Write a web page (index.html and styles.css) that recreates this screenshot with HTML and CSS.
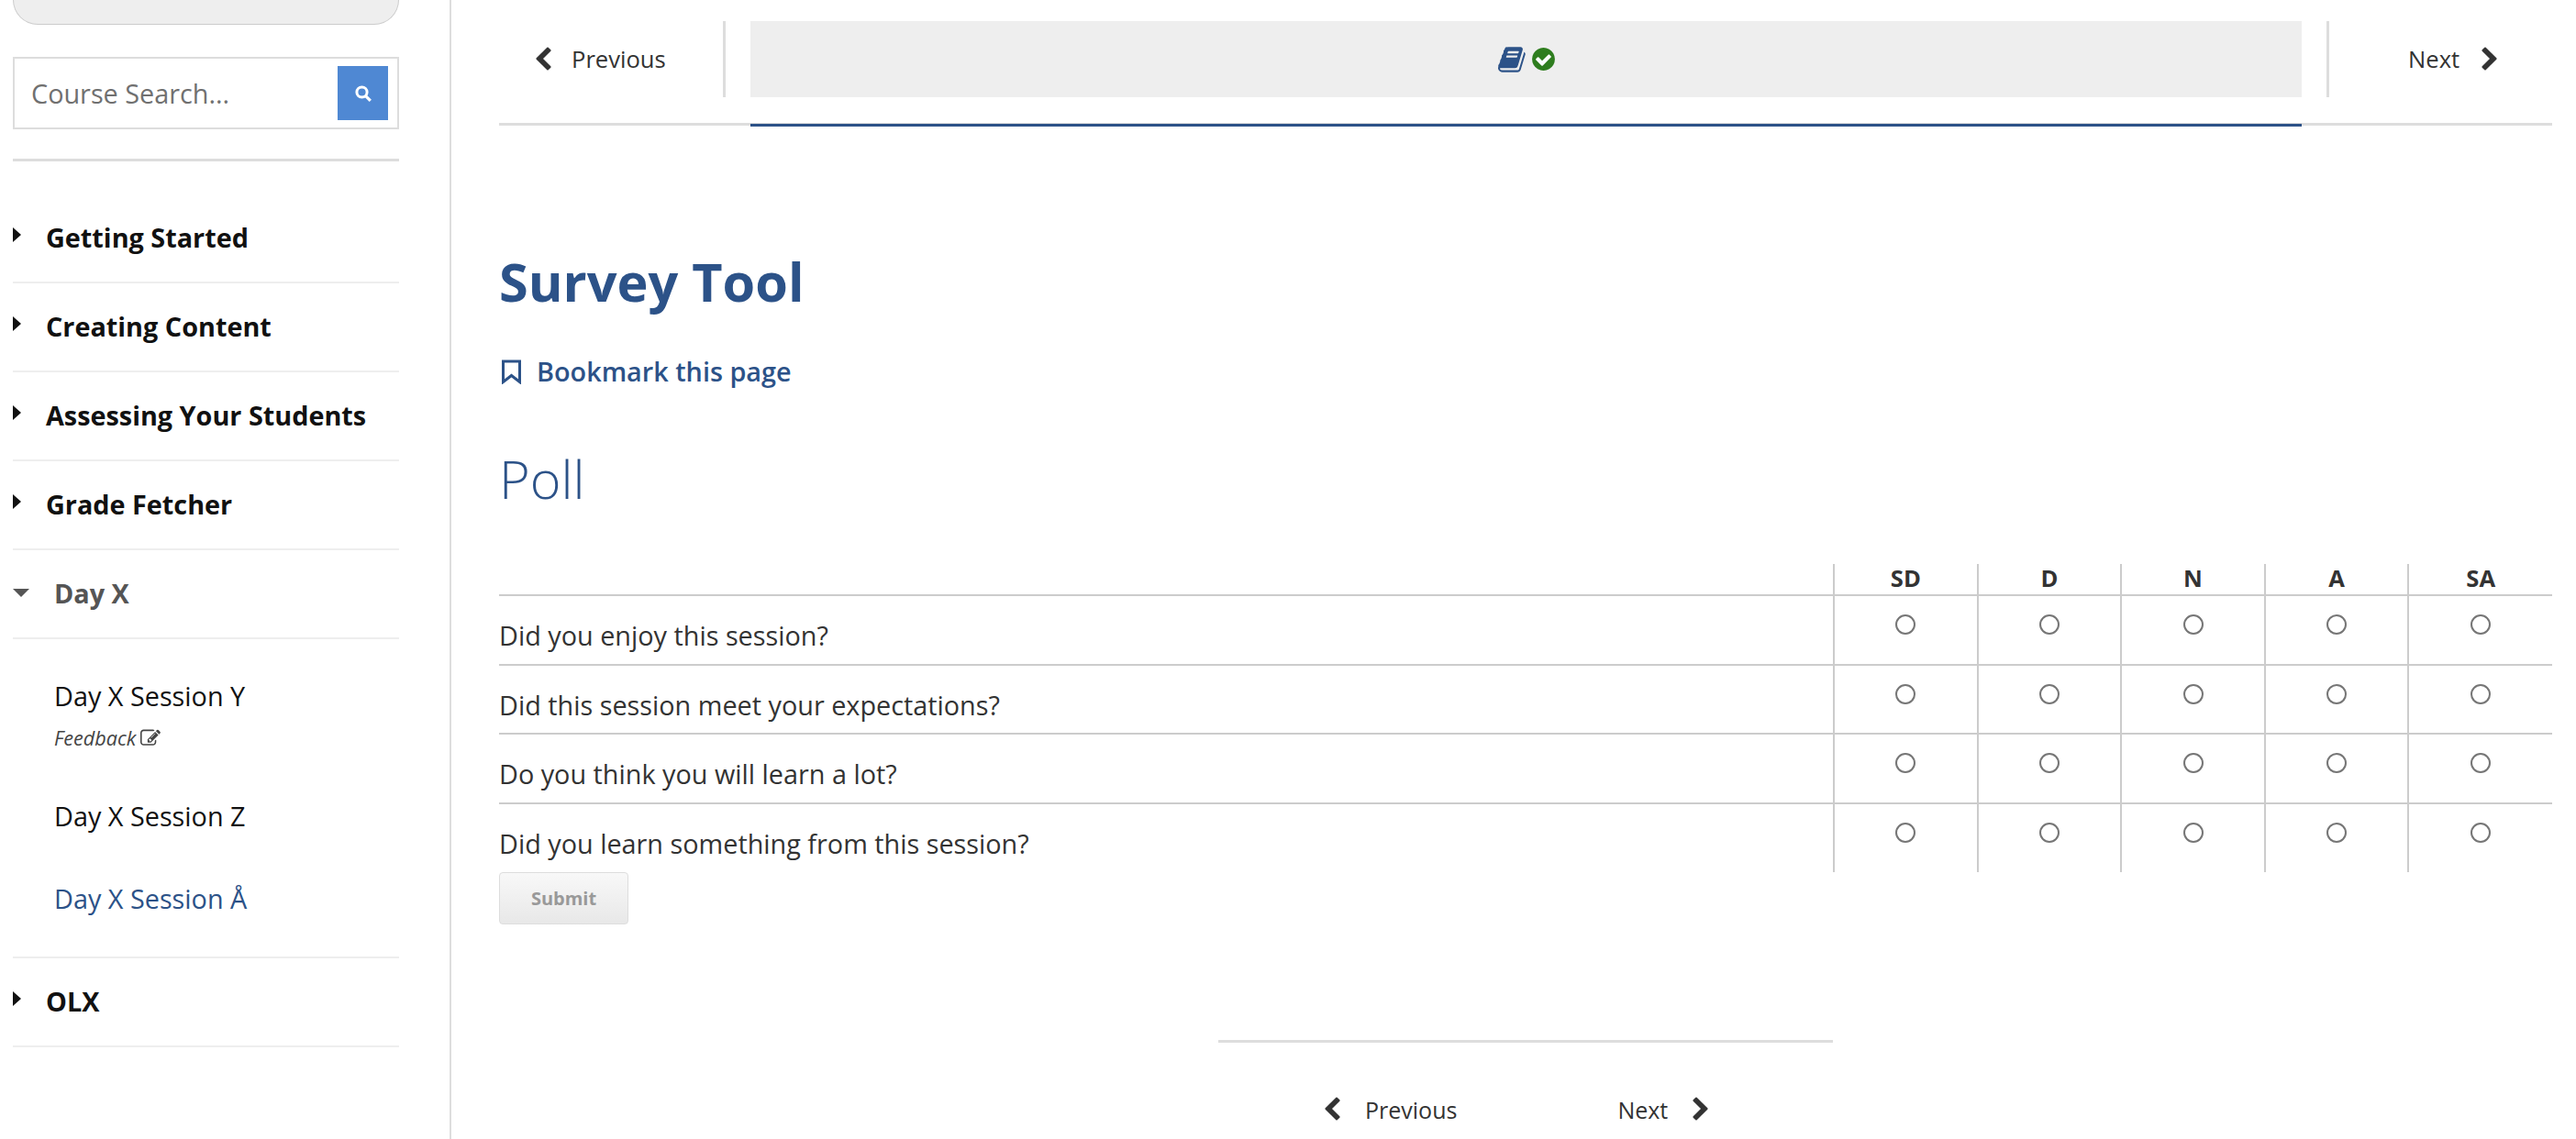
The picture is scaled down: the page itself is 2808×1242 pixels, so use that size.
FILE: index.html
```html
<!DOCTYPE html>
<html lang="en">

<head>
    <meta charset="UTF-8">
    <title>Survey Tool</title>
    <link rel="stylesheet" href="styles.css">
</head>

<body>

<div class="page">
    <aside class="sidebar">
        <div class="pill"></div>

        <div class="search">
            <span class="search-text">Course Search...</span>
            <button class="search-btn" type="button" aria-label="Search">
                <svg width="20" height="20" viewBox="0 0 20 20" fill="none" stroke="#fff">
                    <circle cx="8.5" cy="8.5" r="5.6" stroke-width="3"/>
                    <path d="M12.8 12.8l5 5" stroke-width="3.2"/>
                </svg>
            </button>
        </div>

        <ul class="menu">
            <li class="chapter"><span class="caret-right"></span>Getting Started</li>
            <li class="chapter"><span class="caret-right"></span>Creating Content</li>
            <li class="chapter"><span class="caret-right"></span>Assessing Your Students</li>
            <li class="chapter"><span class="caret-right"></span>Grade Fetcher</li>
            <li class="chapter open"><span class="caret-down"></span>Day X</li>
            <li class="sessions">
                <div class="session first">Day X Session Y</div>
                <div class="feedback">Feedback
                    <svg width="22" height="22" viewBox="0 0 1792 1792" fill="#444"><path d="M888 1184l116-116-152-152-116 116v56h96v96h56zm440-720q-16-16-33 1l-350 350q-17 17-1 33t33-1l350-350q17-17 1-33zm80 594v190q0 119-84.5 203.5t-203.5 84.5h-832q-119 0-203.5-84.5t-84.5-203.5v-832q0-119 84.5-203.5t203.5-84.5h832q63 0 117 25 15 7 18 23 3 17-9 29l-49 49q-14 14-32 8-23-6-45-6h-832q-66 0-113 47t-47 113v832q0 66 47 113t113 47h832q66 0 113-47t47-113v-126q0-13 9-22l64-64q15-15 35-7t20 29zm-96-738l288 288-672 672h-288v-288zm444 132l-92 92-288-288 92-92q28-28 68-28t68 28l152 152q28 28 28 68t-28 68z"/></svg>
                </div>
                <div class="session second">Day X Session Z</div>
                <div class="session third current">Day X Session Å</div>
            </li>
            <li class="chapter"><span class="caret-right"></span>OLX</li>
        </ul>
    </aside>

    <main class="content">
        <div class="topnav">
            <a class="nav-btn prev">
                <svg class="chev" viewBox="0 0 1792 1792"><path d="M1427 301l-531 531 531 531q19 19 19 45t-19 45l-166 166q-19 19-45 19t-45-19l-742-742q-19-19-19-45t19-45l742-742q19-19 45-19t45 19l166 166q19 19 19 45t-19 45z"/></svg>
                Previous
            </a>
            <div class="tab">
                <svg width="32" height="32" viewBox="0 0 1792 1792" fill="#2c5288"><path d="M1639 478q40 57 18 129l-275 906q-19 64-76.5 107.5t-122.5 43.5h-923q-77 0-148.5-53.5t-99.5-131.5q-24-67-2-127 0-4 3-27t4-37q1-8-3-21.5t-3-19.5q2-11 8-21t16.5-23.5 16.5-23.5q23-38 45-91.5t30-91.5q3-10 .5-30t-.5-28q3-11 17-28t17-23q21-36 42-92t25-90q1-9-2.5-32t.5-28q4-13 22-30.5t22-22.5q19-26 42.5-84.5t27.5-96.5q1-8-3-25.5t-2-26.5q2-8 9-18t18-23 17-21q8-12 16.5-30.5t15-35 16-36 19.5-32 26.5-23.5 36-11.5 47.5 5.5l-1 3q38-9 51-9h761q74 0 114 56t18 130l-274 906q-36 119-71.5 153.5t-128.5 34.5h-869q-27 0-38 15-11 16-1 43 24 70 144 70h923q29 0 56-15.5t35-41.5l300-987q7-22 5-57 38 15 59 43zm-1064 2q-4 13 2 22.5t20 9.5h608q13 0 25.5-9.5t16.5-22.5l21-64q4-13-2-22.5t-20-9.5h-608q-13 0-25.5 9.5t-16.5 22.5zm-83 256q-4 13 2 22.5t20 9.5h608q13 0 25.5-9.5t16.5-22.5l21-64q4-13-2-22.5t-20-9.5h-608q-13 0-25.5 9.5t-16.5 22.5z"/></svg>
                <svg width="29" height="29" viewBox="0 0 1792 1792" fill="#2e7d1e"><circle cx="896" cy="896" r="560" fill="#fff"/><path d="M1412 734q0-28-18-46l-91-90q-19-19-45-19t-45 19l-408 407-226-226q-19-19-45-19t-45 19l-91 90q-18 18-18 46 0 27 18 45l362 362q19 19 45 19 27 0 46-19l543-543q18-18 18-45zm252 162q0 209-103 385.5t-279.5 279.5-385.5 103-385.5-103-279.5-279.5-103-385.5 103-385.5 279.5-279.5 385.5-103 385.5 103 279.5 279.5 103 385.5z"/></svg>
            </div>
            <a class="nav-btn next">
                Next
                <svg class="chev" viewBox="0 0 1792 1792"><path d="M1363 877l-742 742q-19 19-45 19t-45-19l-166-166q-19-19-19-45t19-45l531-531-531-531q-19-19-19-45t19-45l166-166q19-19 45-19t45 19l742 742q19 19 19 45t-19 45z"/></svg>
            </a>
        </div>

        <h1>Survey Tool</h1>

        <a class="bookmark">
            <svg width="23" height="27" viewBox="0 0 23 27" fill="none" stroke="#2c5288" stroke-width="3"><path d="M2.5 2h18v22.5l-9-7-9 7z"/></svg>
            Bookmark this page
        </a>

        <h2>Poll</h2>

        <table class="poll">
            <thead>
                <tr>
                    <th class="question"></th>
                    <th>SD</th>
                    <th>D</th>
                    <th>N</th>
                    <th>A</th>
                    <th>SA</th>
                </tr>
            </thead>
            <tbody>
                <tr>
                    <td class="question">Did you enjoy this session?</td>
                    <td><input type="radio" name="q1"></td>
                    <td><input type="radio" name="q1"></td>
                    <td><input type="radio" name="q1"></td>
                    <td><input type="radio" name="q1"></td>
                    <td><input type="radio" name="q1"></td>
                </tr>
                <tr>
                    <td class="question">Did this session meet your expectations?</td>
                    <td><input type="radio" name="q2"></td>
                    <td><input type="radio" name="q2"></td>
                    <td><input type="radio" name="q2"></td>
                    <td><input type="radio" name="q2"></td>
                    <td><input type="radio" name="q2"></td>
                </tr>
                <tr>
                    <td class="question">Do you think you will learn a lot?</td>
                    <td><input type="radio" name="q3"></td>
                    <td><input type="radio" name="q3"></td>
                    <td><input type="radio" name="q3"></td>
                    <td><input type="radio" name="q3"></td>
                    <td><input type="radio" name="q3"></td>
                </tr>
                <tr>
                    <td class="question">Did you learn something from this session?</td>
                    <td><input type="radio" name="q4"></td>
                    <td><input type="radio" name="q4"></td>
                    <td><input type="radio" name="q4"></td>
                    <td><input type="radio" name="q4"></td>
                    <td><input type="radio" name="q4"></td>
                </tr>
            </tbody>
        </table>

        <button class="submit" type="button" disabled>Submit</button>

        <div class="bottomnav">
            <a class="bottom-btn">
                <svg class="chev" viewBox="0 0 1792 1792"><path d="M1427 301l-531 531 531 531q19 19 19 45t-19 45l-166 166q-19 19-45 19t-45-19l-742-742q-19-19-19-45t19-45l742-742q19-19 45-19t45 19l166 166q19 19 19 45t-19 45z"/></svg>
                Previous
            </a>
            <a class="bottom-btn">
                Next
                <svg class="chev" viewBox="0 0 1792 1792"><path d="M1363 877l-742 742q-19 19-45 19t-45-19l-166-166q-19-19-19-45t19-45l531-531-531-531q-19-19-19-45t19-45l166-166q19-19 45-19t45 19l742 742q19 19 19 45t-19 45z"/></svg>
            </a>
        </div>
    </main>
</div>

</body>
</html>
```

FILE: styles.css
```css
html, body {
    margin: 0;
    height: 100%;
    overflow: hidden;
    background: #ffffff;
}

body {
    font-family: "Open Sans", sans-serif;
    color: #111;
}

.page {
    display: flex;
    height: 1242px;
}

/* sidebar */
.sidebar {
    flex: none;
    width: 476px;
    border-right: 2px solid #ddd;
    padding-left: 14px;
    margin-right: 52px;
}

.pill {
    width: 421px;
    height: 27px;
    box-sizing: border-box;
    background: #eee;
    border: 1px solid #ccc;
    border-top: none;
    border-radius: 0 0 36px 36px;
}

.search {
    width: 421px;
    height: 79px;
    box-sizing: border-box;
    margin-top: 35px;
    border: 2px solid #ddd;
    display: flex;
    align-items: center;
    justify-content: space-between;
    padding: 0 10px 0 18px;
}

.search-text {
    font-size: 28.8px;
    color: #707070;
}

.search-btn {
    width: 55px;
    height: 59px;
    border: none;
    padding: 0;
    background: #4f88d3;
    display: flex;
    align-items: center;
    justify-content: center;
}

.menu {
    list-style: none;
    margin: 32px 0 0;
    padding: 0;
    width: 421px;
    border-top: 3px solid #ddd;
    padding-top: 36px;
}

.chapter {
    display: flex;
    align-items: center;
    height: 97px;
    box-sizing: border-box;
    border-bottom: 2px solid #eee;
    font-size: 28.8px;
    font-weight: 700;
    padding-bottom: 3px;
    color: #111;
}

.caret-right {
    width: 0;
    height: 0;
    border-left: 9px solid #111;
    border-top: 8px solid transparent;
    border-bottom: 8px solid transparent;
    margin-right: 27px;
    margin-top: -4px;
}

.caret-down {
    width: 0;
    height: 0;
    border-top: 9px solid #555;
    border-left: 9px solid transparent;
    border-right: 9px solid transparent;
    margin-right: 27px;
}

.chapter.open {
    color: #555;
}

.sessions {
    padding: 43px 0 44px 45px;
    height: 348px;
    box-sizing: border-box;
    border-bottom: 2px solid #eee;
}

.session {
    font-size: 28.8px;
    line-height: 38px;
}

.session.second {
    margin-top: 52px;
}

.session.third {
    margin-top: 52px;
}

.current {
    color: #2c5288;
}

.feedback {
    font-size: 21.6px;
    font-style: italic;
    color: #444;
    line-height: 28px;
    margin-top: 13px;
    display: flex;
    align-items: center;
    gap: 5px;
}

/* main column */
.content {
    width: 2238px;
    flex: none;
}

.topnav {
    display: flex;
    height: 137px;
    box-sizing: border-box;
    padding-top: 23px;
    align-items: flex-start;
    border-bottom: 3px solid #ddd;
}

.nav-btn {
    height: 83px;
    display: flex;
    align-items: center;
    font-size: 25.6px;
    color: #333;
    flex: none;
    box-sizing: border-box;
}

.prev {
    width: 247px;
    padding-left: 39px;
    gap: 22px;
    border-right: 3px solid #ddd;
    margin-right: 27px;
}

.next {
    width: 246px;
    margin-left: 27px;
    padding-left: 86px;
    gap: 24px;
    border-left: 3px solid #ddd;
}

.chev {
    width: 28px;
    height: 28px;
    fill: #333;
    flex: none;
    margin: 0 -5px;
}

.tab {
    flex: 1;
    height: 83px;
    box-sizing: border-box;
    padding-left: 3px;
    background: #eee;
    display: flex;
    align-items: center;
    justify-content: center;
    gap: 3px;
    position: relative;
}

/* selected tab underline sits over the nav border */
.tab::after {
    content: "";
    position: absolute;
    left: 0;
    right: 0;
    top: 112px;
    height: 3px;
    background: #2c5288;
}

h1 {
    margin: 130px 0 0;
    font-size: 57.6px;
    line-height: 80px;
    font-weight: 700;
    color: #2c5288;
}

.bookmark {
    display: flex;
    align-items: center;
    gap: 16px;
    margin-top: 38px;
    padding-left: 2px;
    font-size: 28.8px;
    line-height: 40px;
    font-weight: 600;
    color: #2c5288;
}

h2 {
    margin: 56px 0 0;
    font-size: 57.6px;
    line-height: 82px;
    font-weight: 300;
    color: #2c5288;
}

.poll {
    table-layout: fixed;
    width: 2238px;
    border-collapse: collapse;
    margin-top: 52px;
}

.poll th {
    height: 34px;
    padding: 0 0 2px;
    width: 156.6px;
    box-sizing: border-box;
    font-size: 25.6px;
    line-height: 28px;
    font-weight: 700;
    color: #333;
    border-left: 2px solid #ccc;
    border-bottom: 2px solid #ccc;
    text-align: center;
}

.poll th.question {
    width: auto;
    border-left: none;
}

.poll td {
    height: 75.5px;
    padding: 0;
    box-sizing: border-box;
    border-left: 2px solid #ccc;
    border-bottom: 2px solid #ccc;
    text-align: center;
    vertical-align: top;
}

.poll tbody tr:last-child td {
    border-bottom: none;
}

.poll td.question {
    border-left: none;
    text-align: left;
    font-size: 28.8px;
    line-height: 38px;
    color: #333;
    padding-top: 24px;
}

.poll input {
    appearance: none;
    display: block;
    width: 22px;
    height: 22px;
    box-sizing: border-box;
    margin: 20px auto 0;
    border: 2px solid #767676;
    border-radius: 50%;
    background: #fff;
}

.submit {
    display: block;
    width: 141px;
    height: 57px;
    padding: 0;
    font-family: inherit;
    font-size: 20px;
    font-weight: 700;
    color: #999;
    border: 1px solid #ddd;
    border-radius: 4px;
    background: linear-gradient(#f8f8f8, #e8e8e8);
}

.bottomnav {
    width: 670px;
    box-sizing: border-box;
    margin: 126px 0 0 784px;
    border-top: 3px solid #ddd;
    padding-top: 53px;
    display: flex;
    gap: 175px;
    padding-left: 115px;
}

.bottom-btn {
    display: flex;
    align-items: center;
    gap: 27px;
    height: 40px;
    font-size: 25px;
    color: #333;
}
```
